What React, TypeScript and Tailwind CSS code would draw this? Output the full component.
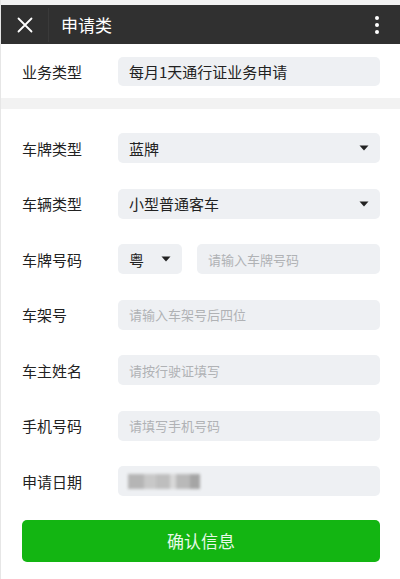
import React from "react";

const font = { fontFamily: '"Noto Sans CJK SC", "Noto Sans", sans-serif' };

function Caret() {
  return (
    <svg width="10" height="6" viewBox="0 0 10 6" className="shrink-0">
      <path d="M0.5 0.5 H9.5 L5 5.5 Z" fill="#222" />
    </svg>
  );
}

function Row({ label, children }: { label: string; children: React.ReactNode }) {
  return (
    <div className="flex items-center h-[30px]">
      <div className="w-[96px] text-[15px] text-[#222] leading-none">{label}</div>
      <div className="flex-1 flex items-center gap-[15px]">{children}</div>
    </div>
  );
}

function Select({ value, className = "flex-1" }: { value: string; className?: string }) {
  return (
    <div className={`${className} h-[30px] bg-[#eef0f3] rounded-[5px] flex items-center justify-between pl-[11px] pr-[11px]`}>
      <span className="text-[15px] text-[#222] leading-none">{value}</span>
      <Caret />
    </div>
  );
}

function Input({ placeholder }: { placeholder: string }) {
  return (
    <div className="flex-1 h-[30px] bg-[#eef0f3] rounded-[5px] flex items-center pl-[11px]">
      <span className="text-[13px] text-[#b0b2b5] leading-none">{placeholder}</span>
    </div>
  );
}

export default function App() {
  return (
    <div className="w-[400px] h-[579px] bg-white overflow-hidden border-l border-[#e6e6e6]" style={font}>
      <div className="h-[5px] bg-[#f2f2f2]" />
      <div className="h-[39px] bg-[#303030] flex items-center">
        <div className="w-[47px] flex justify-center pl-[1px]">
          <svg width="16" height="16" viewBox="0 0 16 16">
            <path d="M1.5 1.5 L14.5 14.5 M14.5 1.5 L1.5 14.5" stroke="#fff" strokeWidth="1.8" strokeLinecap="round" />
          </svg>
        </div>
        <div className="w-px h-[34px] bg-[#3a3a3a]" />
        <div className="ml-[12px] text-[17px] text-white leading-none">申请类</div>
        <div className="ml-auto mr-[21px] flex flex-col gap-[3px]">
          <div className="w-[4px] h-[4px] rounded-full bg-white" />
          <div className="w-[4px] h-[4px] rounded-full bg-white" />
          <div className="w-[4px] h-[4px] rounded-full bg-white" />
        </div>
      </div>
      <div className="px-[21px] pr-[20px] pt-[12px] pb-[12px]">
        <Row label="业务类型">
          <div className="flex-1 h-[29px] bg-[#eef0f3] rounded-[5px] flex items-center pl-[11px]">
            <span className="text-[15px] text-[#222] leading-none">每月1天通行证业务申请</span>
          </div>
        </Row>
      </div>
      <div className="h-[11px] bg-[#f2f2f2]" />
      <div className="px-[21px] pr-[20px] pt-[24px] flex flex-col gap-[25.5px]">
        <Row label="车牌类型">
          <Select value="蓝牌" />
        </Row>
        <Row label="车辆类型">
          <Select value="小型普通客车" />
        </Row>
        <Row label="车牌号码">
          <Select value="粤" className="w-[64px]" />
          <Input placeholder="请输入车牌号码" />
        </Row>
        <Row label="车架号">
          <Input placeholder="请输入车架号后四位" />
        </Row>
        <Row label="车主姓名">
          <Input placeholder="请按行驶证填写" />
        </Row>
        <Row label="手机号码">
          <Input placeholder="请填写手机号码" />
        </Row>
        <Row label="申请日期">
          <div className="flex-1 h-[30px] bg-[#eef0f3] rounded-[5px] flex items-center pl-[10px]">
            <div className="flex items-center blur-[1.5px]">
              <div className="w-[16px] h-[15px] bg-[#b5b5b5]" />
              <div className="w-[12px] h-[15px] bg-[#c8c8c8]" />
              <div className="w-[14px] h-[15px] bg-[#bebebe]" />
              <div className="w-[6px] h-[15px] bg-[#d8d8d8]" />
              <div className="w-[14px] h-[15px] bg-[#b9b9b9]" />
              <div className="w-[10px] h-[15px] bg-[#a5a5a5]" />
            </div>
          </div>
        </Row>
        <div className="h-[42px] -mt-[2px] bg-[#13b512] rounded-[5px] flex items-center justify-center">
          <span className="text-[17px] text-[#e8f8e8] leading-none">确认信息</span>
        </div>
      </div>
    </div>
  );
}
